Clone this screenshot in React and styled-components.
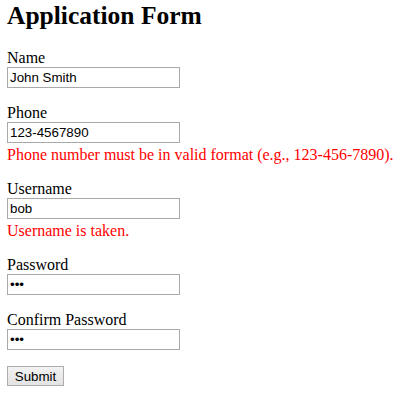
import React from "react";
import styled, { createGlobalStyle } from "styled-components";

const Global = createGlobalStyle`
  html, body { margin: 0; padding: 0; background: #fff; }
  body {
    padding: 1px 7px 0;
    font-family: "Liberation Serif", "Times New Roman", serif;
    font-size: 16px;
    color: #000;
  }
`;

const Title = styled.h1`
  margin: 0 0 18px;
  font-size: 25.5px;
  line-height: 30px;
  font-weight: bold;
  font-family: "Liberation Serif", "Times New Roman", serif;
`;

const Form = styled.form`
  margin: 0;
`;

const Field = styled.div`
  margin-bottom: 16px;
`;

const Label = styled.label`
  display: block;
  line-height: 18px;
`;

const Input = styled.input`
  display: block;
  box-sizing: border-box;
  width: 173px;
  height: 21px;
  margin: 0 0 3px;
  padding: 1px 2px;
  border: 1px solid #a9a9a9;
  font-family: "Liberation Sans", Arial, sans-serif;
  font-size: 13.33px;
  color: #000;
  background: #fff;
  outline: none;
`;

const Error = styled.div`
  color: #ff0000;
  line-height: 18px;
`;

const Button = styled.button`
  display: block;
  box-sizing: border-box;
  width: 57px;
  height: 20px;
  margin: 0;
  padding: 0;
  border: 1px solid #adadad;
  border-radius: 0;
  background: linear-gradient(#f2f2f2, #e3e3e3);
  font-family: "Liberation Sans", Arial, sans-serif;
  font-size: 13.33px;
  color: #000;
`;

const fields = [
  { id: "name", label: "Name", value: "John Smith", type: "text" },
  {
    id: "phone",
    label: "Phone",
    value: "123-4567890",
    type: "text",
    error: "Phone number must be in valid format (e.g., 123-456-7890).",
  },
  { id: "username", label: "Username", value: "bob", type: "text", error: "Username is taken." },
  { id: "password", label: "Password", value: "abc", type: "password" },
  { id: "confirm", label: "Confirm Password", value: "abc", type: "password" },
];

export default function App() {
  return (
    <>
      <Global />
      <Title>Application Form</Title>
      <Form onSubmit={(e) => e.preventDefault()}>
        {fields.map((f) => (
          <Field key={f.id}>
            <Label htmlFor={f.id}>{f.label}</Label>
            <Input id={f.id} type={f.type} defaultValue={f.value} />
            {f.error && <Error>{f.error}</Error>}
          </Field>
        ))}
        <Button type="submit">Submit</Button>
      </Form>
    </>
  );
}
